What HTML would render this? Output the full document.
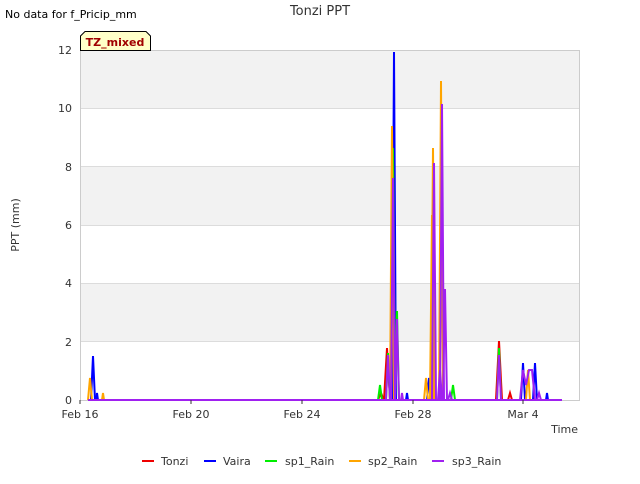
<!DOCTYPE html><html><head><style>body{margin:0;background:#fff;width:640px;height:480px;overflow:hidden;font-family:"DejaVu Sans","Liberation Sans",sans-serif}</style></head><body>
<svg width="640" height="480" xmlns="http://www.w3.org/2000/svg" font-family="DejaVu Sans, Liberation Sans, sans-serif">
<rect x="80" y="50" width="500" height="350" fill="#fff"/>
<rect x="80" y="50" width="500" height="58" fill="#f2f2f2"/>
<rect x="80" y="167" width="500" height="58" fill="#f2f2f2"/>
<rect x="80" y="283" width="500" height="59" fill="#f2f2f2"/>
<g stroke="#dcdcdc" stroke-width="1">
<line x1="80" y1="108.5" x2="580" y2="108.5"/><line x1="80" y1="166.5" x2="580" y2="166.5"/><line x1="80" y1="225.5" x2="580" y2="225.5"/><line x1="80" y1="283.5" x2="580" y2="283.5"/><line x1="80" y1="341.5" x2="580" y2="341.5"/><line x1="80" y1="50.5" x2="580" y2="50.5"/>
</g>
<rect x="80.5" y="50.5" width="499" height="350" fill="none" stroke="#ccc"/>
<g stroke-width="2" fill="none">
<g stroke="#e00">
<polyline points="384,400 387,348 390,400"/><polyline points="496,400 499,341 502,400"/><polyline points="508,400 510,393 512,400"/><polyline points="378,400 381,393 384,400"/>
</g>
<g stroke="#00f">
<polyline points="91,400 93,356 95,400"/><polyline points="96,400 97,393 98,400"/><polyline points="392,400 394,52 396,400"/><polyline points="406,400 407,393 408,400"/><polyline points="521,400 523,363 525,400"/><polyline points="533,400 535,363 537,400"/><polyline points="546,400 547,393 548,400"/><polyline points="427,400 429,378 431,400"/>
</g>
<g stroke="#0e0">
<polyline points="378,400 380,385 382,400"/><polyline points="391,400 393,148 395,400"/><polyline points="395,400 397,311 399,400"/><polyline points="451,400 453,385 455,400"/><polyline points="497,400 499,348 501,400"/><polyline points="386,400 388,353 390,400"/>
</g>
<g stroke="#ffa500">
<polyline points="88,400 90,378 92,400"/><polyline points="102,400 103,393 104,400"/><polyline points="390,400 392,126 394,400"/><polyline points="431,400 433,148 435,400"/><polyline points="430,400 432,215 434,400"/><polyline points="439,400 441,81 443,400"/><polyline points="424,400 426,378 428,400"/><polyline points="526,400 528,370 530,400"/>
</g>
<g stroke="#a020f0">
<polyline points="386,400 388,355 390,400"/><polyline points="391,400 393,178 395,400"/><polyline points="395,400 397,319 399,400"/><polyline points="401,400 402,393 403,400"/><polyline points="432,400 434,163 436,400"/><polyline points="438,400 440,370 442,400"/><polyline points="440,400 442,104 444,400"/><polyline points="443,400 445,289 447,400"/><polyline points="448,400 450,393 452,400"/><polyline points="497,400 499,355 501,400"/><polyline points="520,400 523,370 526,385 529,370 532,370 535,400"/><polyline points="537,400 539,393 541,400"/>
</g>
<line x1="88" y1="400" x2="562" y2="400" stroke="#a020f0"/>
</g>
<g font-size="11" fill="#333" text-anchor="end">
<text x="72" y="404">0</text><text x="72" y="346">2</text><text x="72" y="287">4</text><text x="72" y="229">6</text><text x="72" y="171">8</text><text x="72" y="112">10</text><text x="72" y="54">12</text>
</g>
<g stroke="#333"><line x1="80" y1="400" x2="80" y2="404"/><line x1="191" y1="400" x2="191" y2="404"/><line x1="302" y1="400" x2="302" y2="404"/><line x1="413" y1="400" x2="413" y2="404"/><line x1="523" y1="400" x2="523" y2="404"/></g>
<g font-size="11" fill="#333" text-anchor="middle">
<text x="80" y="418">Feb 16</text><text x="191" y="418">Feb 20</text><text x="302" y="418">Feb 24</text><text x="413" y="418">Feb 28</text><text x="523" y="418">Mar 4</text>
</g>
<text x="578" y="433" font-size="11" fill="#333" text-anchor="end">Time</text>
<text x="19" y="225" font-size="11" fill="#333" text-anchor="middle" transform="rotate(-90 19 225)">PPT (mm)</text>
<text x="320" y="15" font-size="13" fill="#333" text-anchor="middle">Tonzi PPT</text>
<text x="5" y="18" font-size="11" fill="#000">No data for f_Pricip_mm</text>
<path d="M80.5 50.5 V36 L85 31.5 H146 L150.5 36 V50.5 Z" fill="#ffffc8" stroke="#000"/>
<text x="115" y="46" font-size="11" font-weight="bold" fill="#a00000" text-anchor="middle">TZ_mixed</text>
<g font-size="11" fill="#333">
<line x1="142" y1="461" x2="154" y2="461" stroke="#e00" stroke-width="2"/><text x="161" y="465">Tonzi</text>
<line x1="204" y1="461" x2="216" y2="461" stroke="#00f" stroke-width="2"/><text x="223" y="465">Vaira</text>
<line x1="265" y1="461" x2="277" y2="461" stroke="#0e0" stroke-width="2"/><text x="285" y="465">sp1_Rain</text>
<line x1="349" y1="461" x2="361" y2="461" stroke="#ffa500" stroke-width="2"/><text x="368" y="465">sp2_Rain</text>
<line x1="432" y1="461" x2="444" y2="461" stroke="#a020f0" stroke-width="2"/><text x="452" y="465">sp3_Rain</text>
</g>
</svg></body></html>
